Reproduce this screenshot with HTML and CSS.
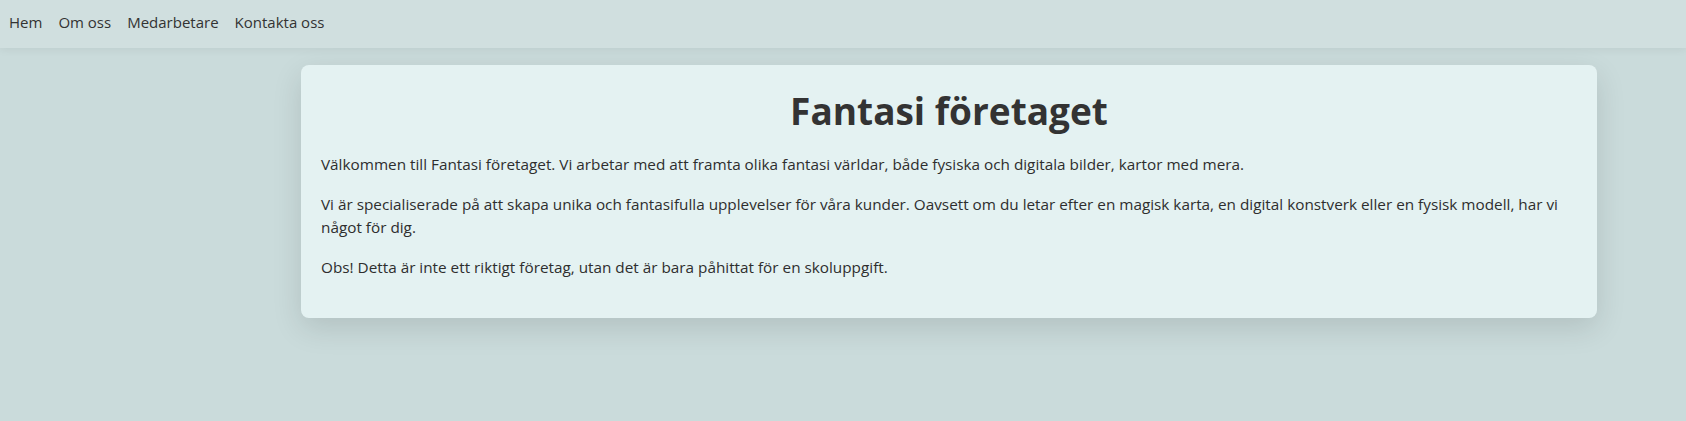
FILE: index.html
```html
<!DOCTYPE html>
<html lang="sv">
<head>
<meta charset="utf-8">
<title>Fantasi företaget</title>
<link rel="stylesheet" href="styles.css">
</head>
<body>
<nav class="topnav">
  <a class="nav-link" href="#">Hem</a>
  <a class="nav-link" href="#">Om oss</a>
  <a class="nav-link" href="#">Medarbetare</a>
  <a class="nav-link" href="#">Kontakta oss</a>
</nav>
<main class="layout">
  <section class="card">
    <h1 class="title">Fantasi företaget</h1>
    <p class="text">Välkommen till Fantasi företaget. Vi arbetar med att framta olika fantasi världar, både fysiska och digitala bilder, kartor med mera.</p>
    <p class="text">Vi är specialiserade på att skapa unika och fantasifulla upplevelser för våra kunder. Oavsett om du letar efter en magisk karta, en digital konstverk eller en fysisk modell, har vi något för dig.</p>
    <p class="text">Obs! Detta är inte ett riktigt företag, utan det är bara påhittat för en skoluppgift.</p>
  </section>
</main>
</body>
</html>
```
FILE: styles.css
```css
html, body {
  margin: 0;
  padding: 0;
}
body {
  background: #cadbdb;
  font-family: "Open Sans", "Noto Sans", sans-serif;
  color: #2e2e2e;
  min-height: 421px;
}
.topnav {
  display: flex;
  gap: 16px;
  align-items: center;
  height: 48px;
  box-sizing: border-box;
  padding: 0 9px 5px;
  background: #d0dfdf;
  box-shadow: 0 2px 8px rgba(0, 0, 0, 0.06);
  position: relative;
}
.nav-link {
  color: #333;
  text-decoration: none;
  font-size: 15px;
}
.layout {
  display: grid;
  grid-template-columns: 301px 1296px;
  padding-top: 17px;
}
.card {
  grid-column: 2;
  background: #e4f2f2;
  border-radius: 8px;
  padding: 4px 20px 22px;
  box-shadow: 0 10px 30px rgba(0, 0, 0, 0.12);
}
.title {
  text-align: center;
  font-size: 37px;
  font-weight: 700;
  color: #333;
  margin: 15px 0 15px;
  line-height: 54px;
}
.text {
  font-size: 15.3px;
  line-height: 22.6px;
  margin: 0 0 17.5px;
}
```
